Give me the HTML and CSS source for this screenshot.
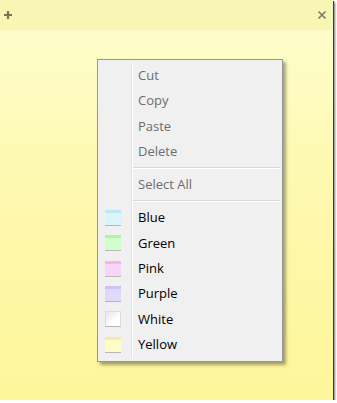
FILE: index.html
```html
<!DOCTYPE html>
<html>
<head>
<meta charset="utf-8">
<link rel="stylesheet" href="styles.css">
</head>
<body>
<div class="note">
  <div class="titlebar">
    <svg class="tb-icon" width="10" height="10" viewBox="0 0 10 10"><path d="M5 1v8M1 5h8" stroke="#76764e" stroke-width="2.2"/></svg>
    <svg class="tb-icon" width="10" height="10" viewBox="0 0 10 10"><path d="M1.5 1.5l7 7M8.5 1.5l-7 7" stroke="#7a7a64" stroke-width="1.6"/></svg>
  </div>
  <div class="note-body">
    <div class="menu">
      <div class="row"><div class="gutter"></div><div class="label disabled">Cut</div></div>
      <div class="row"><div class="gutter"></div><div class="label disabled">Copy</div></div>
      <div class="row"><div class="gutter"></div><div class="label disabled">Paste</div></div>
      <div class="row"><div class="gutter"></div><div class="label disabled">Delete</div></div>
      <div class="sep"><div class="gutter"></div><div class="line"></div></div>
      <div class="row"><div class="gutter"></div><div class="label disabled">Select All</div></div>
      <div class="sep"><div class="gutter"></div><div class="line"></div></div>
      <div class="row"><div class="gutter"><span class="sw blue"></span></div><div class="label">Blue</div></div>
      <div class="row"><div class="gutter"><span class="sw green"></span></div><div class="label">Green</div></div>
      <div class="row"><div class="gutter"><span class="sw pink"></span></div><div class="label">Pink</div></div>
      <div class="row"><div class="gutter"><span class="sw purple"></span></div><div class="label">Purple</div></div>
      <div class="row"><div class="gutter"><span class="sw white"></span></div><div class="label">White</div></div>
      <div class="row"><div class="gutter"><span class="sw yellow"></span></div><div class="label">Yellow</div></div>
    </div>
  </div>
</div>
</body>
</html>
```
FILE: styles.css
```css
html, body {
  margin: 0;
  padding: 0;
  background: #ffffff;
}
body {
  font-family: "Open Sans", "Noto Sans", sans-serif;
}
.note {
  width: 333px;
  height: 400px;
  display: flex;
  flex-direction: column;
  box-shadow: 1px 1px 0 #3c3c3c, 2px 2px 2px rgba(0,0,0,0.55);
}
.titlebar {
  height: 30px;
  flex: none;
  background: #f8f6b4;
  display: flex;
  align-items: center;
  justify-content: space-between;
  padding: 0 6px 0 3px;
}
.tb-icon {
  display: block;
}
.note-body {
  flex: 1;
  position: relative;
  background: linear-gradient(#fefdca, #fdf9b0 40%, #fdf69a);
}
.menu {
  position: absolute;
  left: 97px;
  top: 29px;
  width: 180px;
  background: #f0f0f0;
  border: 1px solid #979797;
  padding: 3px 2px 4px;
  box-shadow: 3px 3px 3px rgba(0,0,0,0.35);
}
.row, .sep {
  display: flex;
}
.row {
  height: 25.3px;
}
.sep {
  height: 8px;
}
.gutter {
  width: 31px;
  flex: none;
  border-right: 1px solid #e2e3e3;
  box-shadow: 1px 0 0 #ffffff;
  display: flex;
  align-items: center;
}
.label {
  padding-left: 6px;
  font-size: 13px;
  line-height: 25.3px;
  color: #000;
}
.label.disabled {
  color: #6d6d6d;
}
.line {
  flex: 1;
  margin-left: 1px;
  align-self: center;
  height: 0;
  border-top: 1px solid #d7d7d7;
  border-bottom: 1px solid #ffffff;
}
.sw {
  display: block;
  width: 16px;
  height: 16px;
  margin-left: 5px;
  box-sizing: border-box;
  border-bottom: 1px solid #b8b8b8;
}
.sw.blue { background: linear-gradient(#bfe6f3 0 3px, #d9f4fb 3px); }
.sw.green { background: linear-gradient(#b5f0ae 0 3px, #d2fdcd 3px); }
.sw.pink { background: linear-gradient(#efb9ec 0 3px, #f6d5f6 3px); }
.sw.purple { background: linear-gradient(#d0c2f4 0 3px, #e1d9fb 3px); }
.sw.white { background: linear-gradient(135deg, #e6e6e6, #ffffff 60%); border: 1px solid #dcdcdc; border-bottom-color: #b8b8b8; }
.sw.yellow { background: linear-gradient(#f4eb9f 0 3px, #fdfbc8 3px); }
```
